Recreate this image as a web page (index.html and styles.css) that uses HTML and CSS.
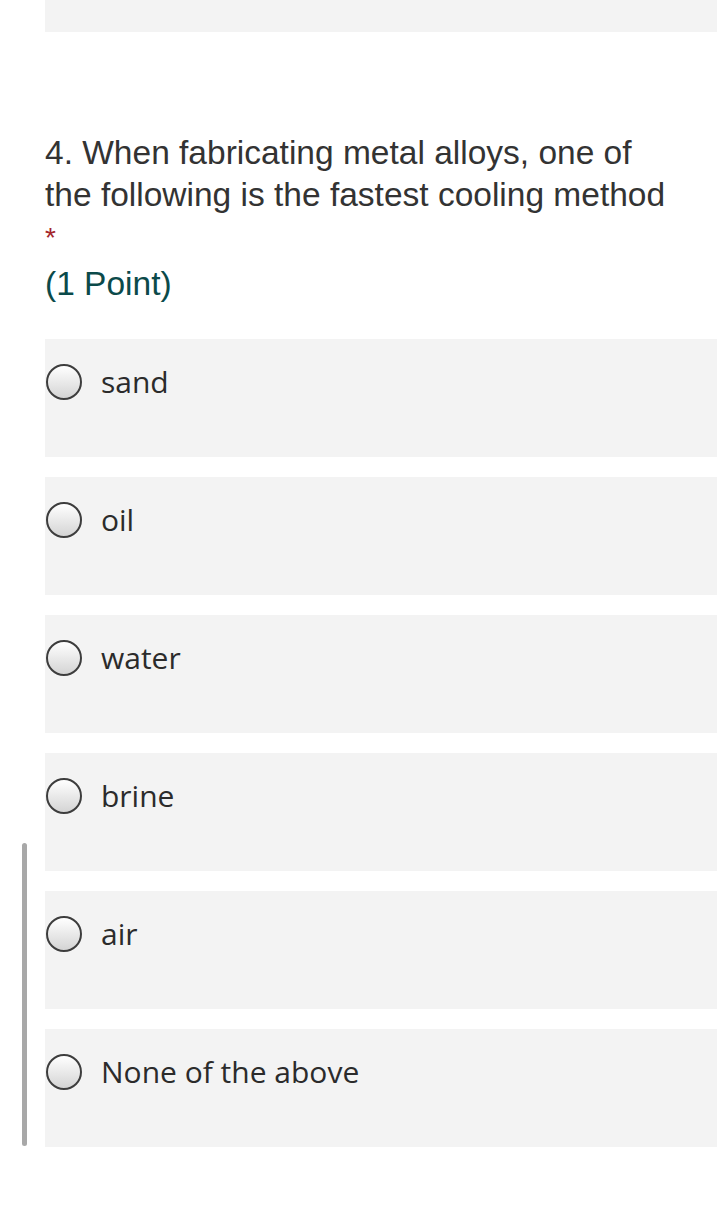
FILE: index.html
```html
<!DOCTYPE html>
<html>
<head>
<meta charset="utf-8">
<link rel="stylesheet" href="styles.css">
</head>
<body>
<div class="page">
  <div class="prev-block"></div>
  <div class="question">
    <div class="q-title">4. When fabricating metal alloys, one of the following is the fastest cooling method</div>
    <div class="q-req">*</div>
    <div class="q-points">(1 Point)</div>
  </div>
  <div class="options">
    <div class="option"><span class="radio"></span><span class="label">sand</span></div>
    <div class="option"><span class="radio"></span><span class="label">oil</span></div>
    <div class="option"><span class="radio"></span><span class="label">water</span></div>
    <div class="option"><span class="radio"></span><span class="label">brine</span></div>
    <div class="option"><span class="radio"></span><span class="label">air</span></div>
    <div class="option"><span class="radio"></span><span class="label">None of the above</span></div>
  </div>
</div>
<div class="scrollbar"></div>
</body>
</html>
```
FILE: styles.css
```css
html, body {
  margin: 0;
  padding: 0;
  background: #ffffff;
}
.page {
  padding-left: 45px;
  width: 672px;
}
.prev-block {
  height: 32px;
  background: #f3f3f3;
}
.question {
  margin-top: 100px;
  padding-right: 40px;
}
.q-title {
  font-family: "Liberation Sans", Arial, sans-serif;
  font-size: 33.5px;
  line-height: 42px;
  color: #333333;
}
.q-req {
  font-family: "Liberation Sans", Arial, sans-serif;
  font-size: 28px;
  line-height: 28px;
  color: #a4262c;
  margin-top: 8px;
}
.q-points {
  font-family: "Liberation Sans", Arial, sans-serif;
  font-size: 33.5px;
  line-height: 40px;
  color: #0b4a4a;
  margin-top: 12px;
}
.options {
  margin-top: 35px;
  display: flex;
  flex-direction: column;
  gap: 20px;
}
.option {
  height: 118px;
  box-sizing: border-box;
  background: #f3f3f3;
  display: flex;
  align-items: flex-start;
  padding-top: 25px;
  padding-left: 1px;
}
.radio {
  width: 32px;
  height: 32px;
  border: 2px solid #3d3d3d;
  border-radius: 50%;
  background: linear-gradient(#ffffff, #d4d4d4);
  flex: none;
}
.label {
  margin-left: 19px;
  font-family: "Open Sans", "Noto Sans", sans-serif;
  font-size: 30px;
  line-height: 36px;
  color: #2b2b2b;
}
.scrollbar {
  position: absolute;
  left: 22px;
  top: 843px;
  width: 5px;
  height: 303px;
  border-radius: 3px;
  background: #a8a8a8;
}
```
